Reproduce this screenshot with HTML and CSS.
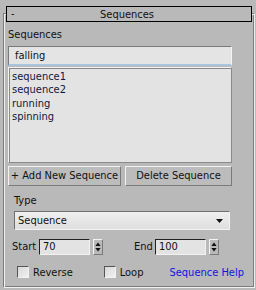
FILE: index.html
```html
<!DOCTYPE html>
<html>
<head>
<meta charset="utf-8">
<link rel="stylesheet" href="styles.css">
</head>
<body>
<div class="frame">
  <div class="header"><span class="minus">-</span><span class="title">Sequences</span></div>
  <div class="body">
    <div class="label seq-label">Sequences</div>
    <div class="textbox">falling</div>
    <div class="listbox">
      <div>sequence1</div>
      <div>sequence2</div>
      <div>running</div>
      <div>spinning</div>
    </div>
    <div class="buttons">
      <div class="btn add">+ Add New Sequence</div>
      <div class="btn del">Delete Sequence</div>
    </div>
    <div class="label type-label">Type</div>
    <div class="dropdown"><span>Sequence</span><svg width="7" height="4" viewBox="0 0 7 4"><path d="M0 0H7L3.5 4Z" fill="#111"/></svg></div>
    <div class="range">
      <span class="rlabel">Start</span>
      <div class="num">70</div>
      <div class="spin"><svg width="9" height="14" viewBox="0 0 9 14"><path d="M4.5 2L7.5 6H1.5Z M1.5 8H7.5L4.5 12Z" fill="#111"/></svg></div>
      <span class="rlabel end">End</span>
      <div class="num">100</div>
      <div class="spin"><svg width="9" height="14" viewBox="0 0 9 14"><path d="M4.5 2L7.5 6H1.5Z M1.5 8H7.5L4.5 12Z" fill="#111"/></svg></div>
    </div>
    <div class="checks">
      <span class="cb"></span><span class="cbl">Reverse</span>
      <span class="cb loop"></span><span class="cbl">Loop</span>
      <span class="help">Sequence Help</span>
    </div>
  </div>
</div>
</body>
</html>
```
FILE: styles.css
```css
html, body {
  margin: 0;
  padding: 0;
  background: #b9b9b9;
  width: 256px;
  height: 290px;
  overflow: hidden;
}
body {
  font-family: "DejaVu Sans Condensed", "Liberation Sans", sans-serif;
  font-size: 11px;
  color: #111;
  padding-top: 13px;
  box-sizing: border-box;
}
.frame {
  margin-left: 3px;
  width: 252px;
  height: 275px;
  box-sizing: border-box;
  border: 1px solid #7c7c7c;
  border-right-color: #f0f0f0;
  border-bottom-color: #f0f0f0;
  box-shadow: inset 1px 1px 0 #f0f0f0, inset -1px -1px 0 #7c7c7c;
}
.header {
  margin: -8px 0 0 2px;
  width: 246px;
  height: 16px;
  box-sizing: border-box;
  border: 1px solid #000;
  background: #b9b9b9;
  display: grid;
  grid-template-columns: 1fr;
  align-items: center;
  position: relative;
}
.minus {
  grid-area: 1 / 1;
  padding-left: 4px;
  margin-top: -2px;
}
.title {
  grid-area: 1 / 1;
  text-align: center;
  padding-right: 4px;
}
.body {
  padding: 0 0 0 4px;
  display: flex;
  flex-direction: column;
}
.label { height: 13px; line-height: 13px; }
.seq-label { margin-top: 6px; }
.textbox {
  margin-top: 5px;
  width: 224px;
  height: 20px;
  box-sizing: border-box;
  background: #e4e4e4;
  border: 1px solid #7a7a7a;
  border-right-color: #f4f4f4;
  border-bottom: 2px solid #a9c4dc;
  padding-left: 6px;
  line-height: 17px;
}
.listbox {
  margin-top: 1px;
  width: 224px;
  height: 96px;
  box-sizing: border-box;
  background: #e3e3e3;
  border: 1px solid #8a8a8a;
  border-left-color: #f4f4f4;
  border-top-color: #f4f4f4;
  box-shadow: inset 1px 1px 0 #888;
  padding: 2px 0 0 3px;
  line-height: 13.3px;
  color: #101840;
}
.buttons {
  margin-top: 3px;
  display: flex;
  gap: 4px;
}
.btn {
  height: 20px;
  box-sizing: border-box;
  border: 1px solid #f2f2f2;
  border-right-color: #7a7a7a;
  border-bottom-color: #7a7a7a;
  background: #bcbcbc;
  text-align: center;
  line-height: 18px;
}
.add { width: 113px; }
.del { width: 107px; }
.type-label { margin: 8px 0 0 6px; }
.dropdown {
  margin: 4px 0 0 6px;
  width: 216px;
  height: 19px;
  box-sizing: border-box;
  border: 1px solid #6f6f6f;
  border-right-color: #f2f2f2;
  border-bottom-color: #f2f2f2;
  background: linear-gradient(#f0f0f0, #dedede);
  display: flex;
  align-items: center;
  justify-content: space-between;
  padding: 0 6px 0 3px;
}
.range {
  margin-top: 8px;
  display: flex;
  align-items: center;
  height: 17px;
}
.rlabel { margin-left: 4px; width: 27px; }
.rlabel.end { margin-left: 31px; width: 21px; }
.num {
  width: 51px;
  height: 16px;
  box-sizing: border-box;
  border: 1px solid #222;
  border-right-color: #f2f2f2;
  border-bottom-color: #f2f2f2;
  background: #e3e3e3;
  line-height: 14px;
  padding-left: 3px;
}
.spin {
  margin-left: 3px;
  width: 10px;
  height: 16px;
  box-sizing: border-box;
  border: 1px solid #f2f2f2;
  border-right-color: #7a7a7a;
  border-bottom-color: #7a7a7a;
  display: flex;
  align-items: center;
  justify-content: center;
}
.checks {
  margin-top: 10px;
  display: flex;
  align-items: center;
  height: 14px;
}
.cb {
  margin-left: 9px;
  width: 12px;
  height: 12px;
  box-sizing: border-box;
  border: 1px solid #555;
  border-right-color: #f2f2f2;
  border-bottom-color: #f2f2f2;
  background: linear-gradient(135deg, #d8d8d8, #f0f0f0);
}
.cb.loop { margin-left: 31px; }
.cbl { margin-left: 4px; }
.help { margin-left: auto; margin-right: 10px; color: #1212e6; }
```
